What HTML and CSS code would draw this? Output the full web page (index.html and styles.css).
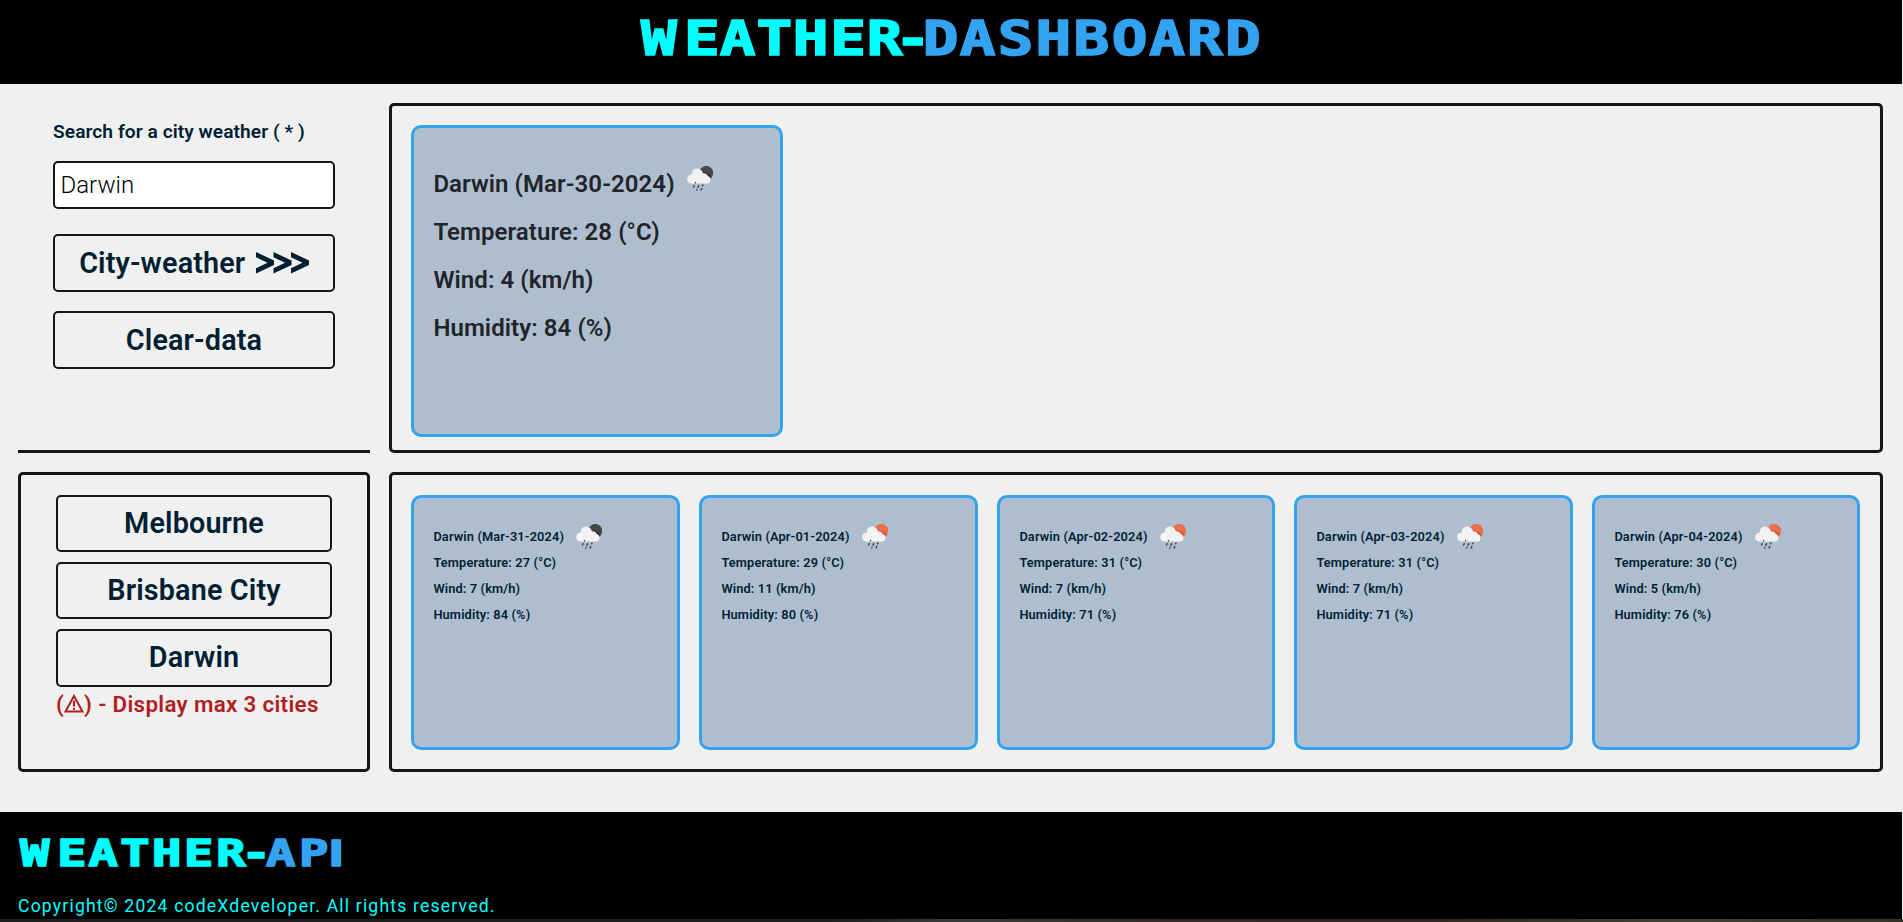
FILE: index.html
```
<!DOCTYPE html>
<html lang="en">
<head>
<meta charset="utf-8">
<title>Weather-Dashboard</title>
<link rel="stylesheet" href="styles.css">
</head>
<body>
<svg class="defs" width="0" height="0" aria-hidden="true">
  <symbol id="rain" viewBox="0 0 26 26">
    <circle class="orb" cx="19.3" cy="6.8" r="6.9"/>
    <path class="shade" d="M13 4.5q2.5 0 3.5 2.2q2.7-.9 4.3 1.2q3 .1 3.7 3.1l-2 3h-9z"/>
    <path fill="#f2f2f2" d="M4.500 17.600a4.500 4.500 0 0 1 .4-9.100a5.200 5.200 0 0 1 8.800-4.500q2 1 2.200 3.300a4.600 4.600 0 0 1 5 2.800a3.900 3.900 0 0 1-.4 7.500z"/>
    <path stroke="#3f4248" stroke-width="1.400" stroke-linecap="round" fill="none" d="M8.500 16.500v.3M7.200 19.700l-.7 1.300M11.600 19.700l-.7 1.700M16 19l-.5.7M10 23.600l-.2.4M14.800 22.400l-.7 1.700"/>
  </symbol>
</svg>
<header class="top">
  <h1><svg class="brand brand-lg" viewBox="0 0 621 84"><g transform="scale(1.25 1)"><text class="cyan" y="55.500" x="16 50.400 79 108.400 137.400 167.300 196.600 219.100">WEATHER-</text><text class="blue" y="55.500" x="241.400 271 301.300 331.600 361.900 392.600 422.500 452.800 483.100">DASHBOARD</text></g></svg></h1>
</header>
<main class="board">
  <section class="search">
    <label class="label" for="city">Search for a city weather ( * )</label>
    <input class="field" id="city" type="text" value="Darwin">
    <button class="btn">City-weather <svg class="arrows" viewBox="0 0 53 22"><path d="M0 0L18 8.500v4.500L0 21.500v-5.300L11.500 10.750L0 5.300zM17.500 0L35.500 8.500v4.500L17.500 21.500v-5.300L29 10.750L17.500 5.300zM35 0L53 8.500v4.500L35 21.500v-5.300L46.500 10.750L35 5.300z"/></svg></button>
    <button class="btn">Clear-data</button>
  </section>
  <section class="panel">
    <article class="card now night">
      <p>Darwin (Mar-30-2024)<svg class="icon"><use href="#rain"/></svg></p>
      <p>Temperature: 28 (°C)</p><p>Wind: 4 (km/h)</p><p>Humidity: 84 (%)</p>
    </article>
  </section>
  <section class="panel history">
    <button class="btn">Melbourne</button>
    <button class="btn">Brisbane City</button>
    <button class="btn">Darwin</button>
    <p class="warn">(<svg class="alert" viewBox="0 0 20 19"><path d="M10 2L18.500 17.500H1.500z"/><path d="M10 6.500v6M10 14v2"/></svg>) - Display max 3 cities</p>
  </section>
  <section class="panel forecast">
    <article class="card night"><p>Darwin (Mar-31-2024)<svg class="icon"><use href="#rain"/></svg></p><p>Temperature: 27 (°C)</p><p>Wind: 7 (km/h)</p><p>Humidity: 84 (%)</p></article>
    <article class="card"><p>Darwin (Apr-01-2024)<svg class="icon"><use href="#rain"/></svg></p><p>Temperature: 29 (°C)</p><p>Wind: 11 (km/h)</p><p>Humidity: 80 (%)</p></article>
    <article class="card"><p>Darwin (Apr-02-2024)<svg class="icon"><use href="#rain"/></svg></p><p>Temperature: 31 (°C)</p><p>Wind: 7 (km/h)</p><p>Humidity: 71 (%)</p></article>
    <article class="card"><p>Darwin (Apr-03-2024)<svg class="icon"><use href="#rain"/></svg></p><p>Temperature: 31 (°C)</p><p>Wind: 7 (km/h)</p><p>Humidity: 71 (%)</p></article>
    <article class="card"><p>Darwin (Apr-04-2024)<svg class="icon"><use href="#rain"/></svg></p><p>Temperature: 30 (°C)</p><p>Wind: 5 (km/h)</p><p>Humidity: 76 (%)</p></article>
  </section>
</main>
<footer class="foot">
  <h2><svg class="brand brand-sm" viewBox="0 0 330 40"><g transform="scale(1.3 1)"><text class="cyan" y="34" x="12.800 41.500 65.600 90 114.400 139 163.800 183.300">WEATHER-</text><text class="blue" y="34" x="202.100 227.500 244.800">AP<tspan class="bar">I</tspan></text></g></svg></h2>
  <p class="copy">Copyright© 2024 codeXdeveloper. All rights reserved.</p>
</footer>
<div class="strip"></div>
</body>
</html>
```
FILE: styles.css
```
* { box-sizing: border-box; }
body { margin: 0; height: 922px; overflow: hidden; background: #f0f0f0; color: #001f33; font-family: Roboto, sans-serif; display: flex; flex-direction: column; }
h1, h2, p { margin: 0; }
.defs { display: block; flex: none; height: 0; }
.top { height: 84px; flex: none; background: #000; padding-left: 639px; margin-right: 1px; }
.brand { display: block; overflow: visible; font-family: "DejaVu Sans Mono", monospace; font-weight: 700; text-anchor: middle; }
.brand text { stroke-width: 1.600px; }
.brand-lg { width: 621px; height: 84px; font-size: 47.500px; }
.brand-sm { width: 330px; height: 40px; font-size: 37.500px; }
.bar { font-family: Roboto, sans-serif; font-weight: 800; }
.cyan { fill: #00ffff; stroke: #00ffff; }
.blue { fill: #33a3f1; stroke: #33a3f1; }
.board { flex: none; height: 728px; padding: 19px 20px 40px 18px; display: grid; grid-template-columns: 352px 1fr; grid-template-rows: 350px 300px; gap: 19px; }
.search { border-bottom: 3px solid #16161a; padding: 17px 35px 0; display: flex; flex-direction: column; }
.label { font-size: 19.200px; font-weight: 600; line-height: 24px; letter-spacing: .05px; white-space: nowrap; }
.field { margin: 17px 0 25px; height: 48px; border: 2px solid #16161a; border-radius: 5px; background: #fff; padding: 0 5.500px; font: 350 24px Roboto, sans-serif; color: #000; }
.btn { height: 58px; flex: none; padding: 0; border: 2px solid #16161a; border-radius: 5px; background: #f0f0f0; color: #001f33; font: 600 28.800px Roboto, sans-serif; letter-spacing: .13px; display: flex; align-items: center; justify-content: center; }
.search .btn { margin-bottom: 19px; }
.arrows { width: 53px; height: 22px; margin-left: 10.500px; fill: #001f33; }
.panel { border: 3px solid #16161a; border-radius: 5px; padding: 19px; min-width: 0; }
.history { padding: 20px 35px; display: flex; flex-direction: column; }
.history .btn { height: 57px; margin-bottom: 10px; padding-bottom: 2px; }
.history .btn:nth-child(3) { height: 58px; margin-bottom: 1px; }
.warn { font-size: 22.400px; line-height: 32px; font-weight: 600; letter-spacing: .31px; color: #b01e1e; white-space: nowrap; }
.alert { width: 20px; height: 19px; fill: none; stroke: #b01e1e; stroke-width: 2; vertical-align: -1px; }
.card { border: 3px solid #33a3f1; border-radius: 10px; background: #afbecf; padding: 26px 19px 0 19.400px; font-size: 12.800px; font-weight: 600; letter-spacing: .14px; min-width: 0; }
.card p { height: 26px; line-height: 26px; white-space: nowrap; }
.icon { width: 26px; height: 26px; margin-left: 12px; vertical-align: middle; overflow: visible; }
.card .icon { position: relative; top: -1px; }
.now { width: 372px; height: 312px; font-size: 24px; letter-spacing: .07px; color: #212529; padding-top: 32px; }
.now p { height: 48px; line-height: 48px; }
.now .icon { top: -7px; }
.icon { --orb: #ec6e4c; --shade: #d94f2a; }
.night .icon { --orb: #48484a; --shade: #303033; }
.orb { fill: var(--orb); }
.shade { fill: var(--shade); }
.forecast { display: grid; grid-template-columns: 269px 279px 278px 279px 268px; gap: 19px; padding: 20px 19px 19px; }
.foot { flex: none; height: 107px; background: #000; padding: 20px 18px 0; margin-right: 1px; }
.copy { margin-top: 21px; color: #00ffff; font-size: 17.600px; line-height: 26px; letter-spacing: 1.180px; }
.strip { height: 3px; background: linear-gradient(90deg, #202020 0%, #202020 44%, #3a3a3a 50%, #382822 62%, #35271f 75%, #443f2f 88%, #3b3025 100%); }
```
